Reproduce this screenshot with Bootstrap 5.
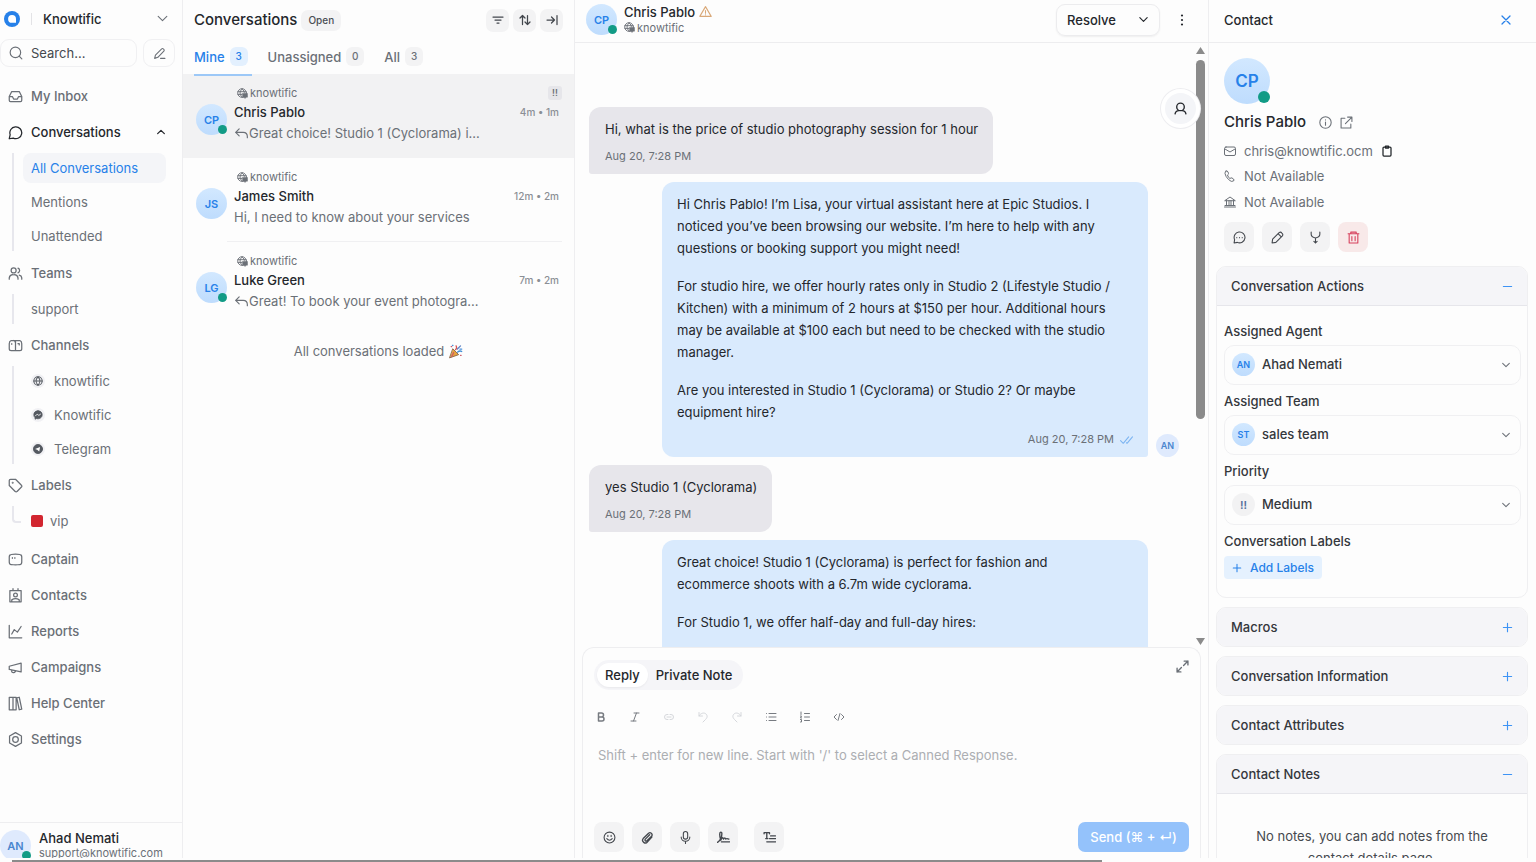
<!DOCTYPE html>
<html lang="en">
<head>
<meta charset="utf-8">
<meta name="viewport" content="width=device-width, initial-scale=1">
<title>Knowtific – Conversations</title>
<link href="https://cdn.jsdelivr.net/npm/bootstrap@5.3.0/dist/css/bootstrap.min.css" rel="stylesheet">
<style>
:root{--ink:#24272c;--mute:#6b7077;--line:#eeeef0;--soft:#f3f3f4;--blue:#2781e9}
body{font-family:Inter,"Liberation Sans",sans-serif;font-size:13px;line-height:20px;color:var(--ink);background:#fdfdfd}
svg{display:block;flex:none;fill:none;stroke:currentColor;stroke-width:2;stroke-linecap:round;stroke-linejoin:round}
svg.bold{stroke-width:2.5}
svg.heavy{stroke-width:3}
svg.solid{fill:currentColor;stroke:none}
button{font:inherit;color:inherit;border:0;background:none;padding:0}
a{color:inherit;text-decoration:none}
h1,h2,h3,p,ul{margin:0;padding:0}
h1,h3{font-size:15px;line-height:22px}
h2{font-size:13px;line-height:20px}
ul{list-style:none}
.mute{color:var(--mute)}
.blue{color:var(--blue)}
.t11{font-size:11px;line-height:18px}
.med{font-weight:500}
.tight{line-height:16px}
.min0{min-width:0;min-height:0}
/* avatars */
.face{position:relative;flex:none;display:flex;align-items:center;justify-content:center;width:31px;height:31px;border-radius:50%;background:linear-gradient(#d2e8ff,#bedcfd);color:var(--blue);font-size:11px;font-weight:600}
.face.tiny{width:23px;height:23px;font-size:9px}
.face.big{width:46px;height:46px;font-size:17px}
.face.pale{background:#dfeafd;color:#4a86cf}
.face.flag{background:#f2f2f3;color:#56709c;font-size:11px}
.face i{position:absolute;right:0;bottom:1px;width:9px;height:9px;border-radius:50%;background:#129b86}
.face.big i{width:12px;height:12px}
/* sidebar */
.side{width:183px;border-right:1px solid var(--line)}
.brand{height:37px;padding:0 13px 0 4px;gap:11px}
.brand .tick{width:1px;height:12px;background:#e3e3e6}
.finder{gap:6px;padding-top:2px}
.box{border:1px solid #f0f0f2;border-radius:9px;background:#fdfdfd}
.find{width:137px;height:28px;padding:0 8px}
.find input{border:0;background:none;outline:0;padding:0;font:inherit;color:var(--ink)}
.find input::placeholder{color:#45494e;opacity:1}
.pen{width:32px;height:28px}
.menu{padding-top:11px}
.menu .top{display:flex;align-items:center;gap:8px;height:36px;padding:0 16px 0 8px;color:#6a6f76;font-weight:500}
.menu .top.on{color:var(--ink)}
.sub{margin:3px 0 3px 12px;border-left:2px solid #e7e7ed;display:flex;flex-direction:column;gap:4px}
.sub.first{margin-bottom:4px}
.sub a{display:flex;align-items:center;gap:9px;height:30px;margin:0 16px 0 9px;padding:0 8px;border-radius:8px;color:#6b7077}
.sub a.on{background:#f4f5f8;color:var(--blue)}
.sub .disc{width:14px;height:14px;border-radius:50%;background:#f1f1f4;display:flex;align-items:center;justify-content:center;color:#555a61}
.sub.last{border-color:transparent;position:relative;margin-bottom:5px}
.sub.last::before{content:"";position:absolute;left:-2px;top:0;width:9px;height:17px;border:2px solid #e7e7ed;border-width:0 0 2px 2px;border-radius:0 0 0 4px}
.sub.last a{gap:7px}
.swatch{width:12px;height:12px;border-radius:2px;background:#d22630}
.me{border-top:1px solid var(--line);height:36px;padding-top:7px}
.me .t11{line-height:14px}
/* conversation list */
.list{width:392px;border-right:1px solid var(--line)}
.list .head{height:40px;padding:0 11px}
.chip{background:var(--soft);border-radius:7px;font-size:10px;font-weight:500;height:21px;padding:0 7px;color:#4a4e54}
.sq{width:23px;height:23px;border-radius:7px;background:var(--soft);display:flex;align-items:center;justify-content:center;color:#43474d}
.tabs{padding:7px 11px 0;height:34px;gap:20px}
.tabs button{position:relative;display:flex;gap:5px;height:27px;align-items:start;font-weight:500;color:var(--mute)}
.tabs .num{background:var(--soft);border-radius:6px;width:18px;height:19px;font-size:10px;line-height:19px;text-align:center}
.tabs .on{color:var(--blue)}
.tabs .on .num{background:#e3f0fe}
.tabs .on::after{content:"";position:absolute;left:0;right:-4px;bottom:-2px;height:2px;background:#9cc8f7;z-index:1}
.conv{height:84px;display:flex;padding-left:13px}
.conv.on{background:#f2f2f3}
.conv .face{margin-top:30px}
.conv .txt{flex:1;min-width:0;padding:10px 0 0 7px;margin-right:12px}
.conv.rule .txt{border-bottom:1px solid #f0f0f2}
.origin{display:flex;align-items:center;gap:2px;color:var(--mute)}
.conv .origin{padding-left:3px}
.when{font-size:10px;color:#8b8f95;padding-right:3px;font-weight:500}
.prio{width:14px;height:14px;border-radius:3px;background:#e6e6ea;font-size:9px;line-height:14px;text-align:center;font-weight:600}
.peek{margin-top:1px}
.done{padding-top:15px}
/* chat */
.bar{height:43px;border-bottom:1px solid #ededef;padding:0 20px 3px 11px}
.who{padding-left:7px}
.who svg.warn{color:#d9a878}
.resolve{height:32px;border:1px solid #ececee;border-radius:9px;box-shadow:0 1px 2px #0000000f;width:104px;padding:0 10px}
.feed{position:relative;padding:64px 29px 0 14px;gap:8px}
.say{border-radius:12px;padding:11px 15px 9px;line-height:22px}
.say p+p{margin-top:16px}
.say time{display:block;font-size:11px;line-height:18px;color:#6b7077;margin-top:7px}
.say.them{background:#e7e6eb;border-bottom-left-radius:3px;align-self:flex-start;padding-left:16px}
.say.us{background:#d9eafd;width:486px;border-bottom-right-radius:3px}
.say.us p{padding-right:14px}
.say.us time{display:flex;justify-content:end;align-items:center;gap:6px}
.say.us time svg{color:#7db5f2}
.rail{position:absolute;right:3px;top:4px;bottom:2px;width:9px;display:flex;flex-direction:column;color:#8b8b8b}
.rail b{flex:0 0 60%;margin-top:6px;border-radius:5px;background:#8b8b8b}
.fab{position:absolute;right:8px;top:46px;width:39px;height:39px;border-radius:50%;background:#f4f5f8;border:4px solid #fff;box-shadow:0 0 0 1px #ededf0;display:flex;align-items:center;justify-content:center}
.desk{border:1px solid var(--line);border-bottom:0;border-radius:12px 12px 0 0;margin:0 7px;height:211px;padding:12px 11px 0}
.modes{background:#f5f5f8;border-radius:15px;height:30px;padding:3px}
.modes button{height:24px;border-radius:12px;padding:0 8px;font-weight:500}
.modes .on{background:#fff;box-shadow:0 1px 2px #0000000d}
.fmt{gap:20px;height:14px;margin-top:20px;color:#777b81}
.fmt button{width:14px;height:14px;display:flex;align-items:center;justify-content:center}
.fmt .off{color:#d6d8dc}
.desk textarea{border:0;background:none;resize:none;outline:0;width:100%;height:66px;margin-top:21px;padding:0 4px;font:inherit;color:inherit}
.desk textarea::placeholder{color:#acaeb2;opacity:1}
.tools{padding-top:11px}
.tool{width:30px;height:30px;border-radius:8px;background:var(--soft);display:flex;align-items:center;justify-content:center;color:#43474d}
.tool.risk{background:#f8e9e9;color:#d6405c}
.send{height:30px;width:111px;border-radius:7px;background:#94c2fb;color:#fff;font-weight:500}
/* contact */
.info{width:328px;border-left:1px solid var(--line)}
.info .bar{padding:0 24px 3px 15px}
.person{padding:15px 15px 14px}
.person .name{margin-top:7px;height:22px;gap:8px}
.person .name h3{margin-right:5px}
.person .row1{height:28px;margin-top:4px}
.person .row2{height:22px}
.person .row3{height:30px}
.person .acts{margin-top:5px}
.fold{border:1px solid #efeff1;border-radius:10px;margin:0 8px 9px 7px;overflow:hidden;flex:none}
.fold>button{display:flex;width:100%;height:38px;align-items:center;justify-content:space-between;padding:0 14px;background:#f5f5f8;font-weight:500;color:#34373c}
.fold.open>button{height:39px;border-bottom:1px solid #e6e6eb}
.fold svg.sign{color:#3d93f5}
.fold .fields{padding:15px 6px 18px 7px}
.fold .empty{padding:31px 24px;line-height:22px;color:#45494e;text-align:center}
.pick{position:relative;margin:4px 0 6px}
.pick .face{position:absolute;left:8px;top:8px}
.pick select{appearance:none;height:40px;width:100%;border:1px solid #f0f0f2;border-radius:10px;background-color:transparent;padding:0 30px 2px 37px;font:inherit;font-weight:500;color:#34373c;outline:0}
.pick svg{position:absolute;right:10px;top:15px;pointer-events:none;color:#6b7077}
.fold label,.fold .cap{font-weight:500;color:#34373c;display:block}
.add{background:#e5f1fe;color:var(--blue);border-radius:4px;height:23px;padding:0 8px;font-size:12px;font-weight:500;gap:8px;margin-top:5px}
.hbar{height:4px;padding:2px 0 0 12px}
.hbar b{display:block;width:71.5%;height:2px;background:#8b8b8b}
</style>
</head>
<body>
<svg width="0" height="0" class="position-absolute" aria-hidden="true">
<symbol id="down" viewBox="0 0 24 24"><path d="m4 8 8 8 8-8"/></symbol>
<symbol id="globe" viewBox="0 0 24 24"><circle cx="11" cy="11" r="9.500"/><path d="M2 8h18M2 14h9M11 2c-6 6-6 12 0 18M11 2c4 3 5 6 5 9"/><path d="M12 12h11v8h-3l-2.500 3-2.500-3h-3z" fill="currentColor" stroke-width="1"/></symbol>
<symbol id="reply" viewBox="0 0 24 24"><path d="M8 5 2 11l6 6M2 11h13c4 0 7 3 7 7v2"/></symbol>
<symbol id="minus" viewBox="0 0 24 24"><path d="M3 12h18"/></symbol>
<symbol id="plus" viewBox="0 0 24 24"><path d="M3 12h18M12 3v18"/></symbol>
</svg>
<div class="d-flex flex-column vh-100 overflow-hidden">
<div class="d-flex flex-grow-1 overflow-hidden min0">

<aside class="side d-flex flex-column flex-shrink-0">
  <button class="brand d-flex align-items-center w-100">
    <svg class="solid blue" width="16" height="16" viewBox="0 0 16 16"><circle cx="8" cy="8" r="8"/><path d="M8 4a4 4 0 0 1 4 4v3.800H8A3.900 3.900 0 0 1 8 4z" fill="#fff"/></svg>
    <span class="tick"></span>
    <span class="med">Knowtific</span>
    <svg class="ms-auto mute" width="13" height="13"><use href="#down"/></svg>
  </button>
  <div class="finder d-flex">
    <label class="find box d-flex align-items-center gap-2"><svg class="mute" width="14" height="14" viewBox="0 0 24 24"><circle cx="11" cy="11" r="9"/><path d="m22 22-4.500-4.500"/></svg><input type="search" class="w-100 min0" placeholder="Search..." aria-label="Search"></label>
    <button class="pen box d-flex align-items-center justify-content-center mute" aria-label="Compose"><svg width="13" height="13" viewBox="0 0 24 24"><path d="M3 21l1.500-6L16 3.500a2 2 0 0 1 3 0l1 1a2 2 0 0 1 0 3L9 19l-6 2zM14 21h8"/></svg></button>
  </div>
  <nav class="menu flex-grow-1 overflow-hidden" aria-label="Main">
    <a class="top" href="#"><svg width="15" height="15" viewBox="0 0 24 24"><path d="M2 12h5l2 4h6l2-4h5M6 4h12l4 8v6a2 2 0 0 1-2 2H4a2 2 0 0 1-2-2v-6z"/></svg>My Inbox</a>
    <a class="top on" href="#"><svg width="15" height="15" viewBox="0 0 24 24"><path d="M3.500 15.500A9.500 9.500 0 1 1 8.500 21L2 22z"/></svg>Conversations<svg class="ms-auto heavy" width="10" height="10" viewBox="0 0 24 24"><path d="m4 16 8-8 8 8"/></svg></a>
    <ul class="sub first"><li><a class="on" href="#">All Conversations</a></li><li><a href="#">Mentions</a></li><li><a href="#">Unattended</a></li></ul>
    <a class="top" href="#"><svg width="15" height="15" viewBox="0 0 24 24"><circle cx="9" cy="7" r="4"/><path d="M2 21v-2a6 6 0 0 1 6-5h2a6 6 0 0 1 6 5v2M16 3.500a4 4 0 0 1 0 7.500M22 21v-2a5 5 0 0 0-4-4.500"/></svg>Teams</a>
    <ul class="sub"><li><a href="#">support</a></li></ul>
    <a class="top" href="#"><svg width="15" height="15" viewBox="0 0 24 24"><path d="M5 4h14q3 1 3 5v8q0 3-3 3H5q-3 0-3-3V9q0-4 3-5zM12 4v16M9 4q3 1 3 4M6 9v1M16 9h2v2M12 20H9"/></svg>Channels</a>
    <ul class="sub">
      <li><a href="#"><span class="disc"><svg class="bold" width="10" height="10" viewBox="0 0 24 24"><circle cx="12" cy="12" r="10"/><path d="M2 12h20M12 2c-6 6-6 14 0 20M12 2c6 6 6 14 0 20"/></svg></span>knowtific</a></li>
      <li><a href="#"><span class="disc"><svg width="10" height="10" viewBox="0 0 24 24"><path d="M12 2C6 2 2 6 2 11.500c0 3 1 5 3 7V22l3.500-1.500c8 2 13.500-3 13.500-9C22 6 18 2 12 2z" fill="currentColor"/><path d="m6 14 4-4 4 3 4-3" stroke="#fff"/></svg></span>Knowtific</a></li>
      <li><a href="#"><span class="disc"><svg width="10" height="10" viewBox="0 0 24 24"><circle cx="12" cy="12" r="11" fill="currentColor"/><path d="m5 12 12-5-2 11-5-4z" fill="#fff" stroke="none"/></svg></span>Telegram</a></li>
    </ul>
    <a class="top" href="#"><svg width="15" height="15" viewBox="0 0 24 24"><path d="M2 4a2 2 0 0 1 2-2h8l9.500 9.500a2 2 0 0 1 0 3l-7 7a2 2 0 0 1-3 0L2 12z"/><circle cx="7.500" cy="7.500" r=".6"/></svg>Labels</a>
    <ul class="sub last"><li><a href="#"><span class="swatch"></span>vip</a></li></ul>
    <a class="top" href="#"><svg width="15" height="15" viewBox="0 0 24 24"><path d="M5 4q7-1 14 0 3 0 3 4v8q0 4-3 4-7 1-14 0-3 0-3-4V8q0-4 3-4zM7 9v1M11 9v1"/></svg>Captain</a>
    <a class="top" href="#"><svg width="15" height="15" viewBox="0 0 24 24"><path d="M3 4h18v18H3zM8 1v3M16 1v3M6 22v-3q6-4 12 0v3"/><circle cx="12" cy="11" r="3"/></svg>Contacts</a>
    <a class="top" href="#"><svg width="15" height="15" viewBox="0 0 24 24"><path d="M2 2v20h20M6 16l4-7 5 4 6-9"/></svg>Reports</a>
    <a class="top" href="#"><svg width="15" height="15" viewBox="0 0 24 24"><path d="M2 10 21 5v14L2 15zM6 16v3q3 3 6-1"/></svg>Campaigns</a>
    <a class="top" href="#"><svg width="15" height="15" viewBox="0 0 24 24"><path d="M2 2h6v20H2zM8 2h5v20H8zM14 3l4-1 4 19-4 1z"/></svg>Help Center</a>
    <a class="top" href="#"><svg width="15" height="15" viewBox="0 0 24 24"><path d="m12 1 9.500 5.500v11L12 23l-9.500-5.500v-11z"/><circle cx="12" cy="12" r="4.500"/></svg>Settings</a>
  </nav>
  <div class="me d-flex gap-2">
    <span class="face pale">AN<i></i></span>
    <div><div class="med tight">Ahad Nemati</div><div class="t11 mute">support@knowtific.com</div></div>
  </div>
</aside>

<section class="list d-flex flex-column flex-shrink-0">
  <div class="head d-flex align-items-center">
    <h1 class="med">Conversations</h1>
    <button class="chip ms-1">Open</button>
    <div class="d-flex gap-1 ms-auto">
      <button class="sq" aria-label="Filter"><svg class="bold" width="12" height="12" viewBox="0 0 24 24"><path d="M2 6h20M6 12h12M10 18h4"/></svg></button>
      <button class="sq" aria-label="Sort"><svg class="bold" width="12" height="12" viewBox="0 0 24 24"><path d="M7 21V3M2 8l5-5 5 5M17 3v18M12 16l5 5 5-5"/></svg></button>
      <button class="sq" aria-label="Collapse"><svg class="bold" width="12" height="12" viewBox="0 0 24 24"><path d="M2 12h15M11 6l6 6-6 6M22 3v18"/></svg></button>
    </div>
  </div>
  <div class="tabs d-flex align-items-start">
    <button class="on">Mine <span class="num">3</span></button>
    <button>Unassigned <span class="num">0</span></button>
    <button>All <span class="num">3</span></button>
  </div>
  <a href="#" class="conv on"><span class="face">CP<i></i></span>
    <div class="txt">
      <div class="origin t11"><svg width="11" height="11"><use href="#globe"/></svg>knowtific<span class="prio ms-auto">!!</span></div>
      <div class="d-flex justify-content-between"><span class="med">Chris Pablo</span><span class="when">4m • 1m</span></div>
      <div class="peek d-flex align-items-center mute"><svg width="15" height="14"><use href="#reply"/></svg>Great choice! Studio 1 (Cyclorama) i...</div>
    </div></a>
  <a href="#" class="conv rule"><span class="face">JS</span>
    <div class="txt">
      <div class="origin t11"><svg width="11" height="11"><use href="#globe"/></svg>knowtific</div>
      <div class="d-flex justify-content-between"><span class="med">James Smith</span><span class="when">12m • 2m</span></div>
      <div class="peek mute">Hi, I need to know about your services</div>
    </div></a>
  <a href="#" class="conv"><span class="face">LG<i></i></span>
    <div class="txt">
      <div class="origin t11"><svg width="11" height="11"><use href="#globe"/></svg>knowtific</div>
      <div class="d-flex justify-content-between"><span class="med">Luke Green</span><span class="when">7m • 2m</span></div>
      <div class="peek d-flex align-items-center mute"><svg width="15" height="14"><use href="#reply"/></svg>Great! To book your event photogra...</div>
    </div></a>
  <p class="done d-flex justify-content-center align-items-center gap-1 mute">All conversations loaded
    <svg width="15" height="15" viewBox="0 0 24 24"><path d="M8 8l9 9L3 22z" fill="#e8a33d" stroke="#8a6a4a" stroke-width="1.500"/><path d="M12 9q3-2 1-6" stroke="#d9534f"/><path d="M15 13q4-3 7-1" stroke="#3f8fd6"/><path d="M15 8l5-5" stroke="#5a7fc4"/><path d="M5 4h1M20 18h1M9 14l-3 6" stroke="#c95b6b"/><path d="M19 8h3M7 2h1" stroke="#4a90d9"/></svg></p>
</section>

<main class="flex-grow-1 d-flex flex-column min0">
  <header class="bar d-flex align-items-center flex-shrink-0">
    <span class="face">CP<i></i></span>
    <div class="who"><div class="d-flex align-items-center gap-1 med tight">Chris Pablo<svg class="warn" width="13" height="13" viewBox="0 0 24 24"><path d="M12 3 1.500 21h21zM12 10v5M12 18v.200"/></svg></div>
    <div class="origin t11 tight"><svg width="11" height="11"><use href="#globe"/></svg>knowtific</div></div>
    <button class="resolve ms-auto d-flex align-items-center justify-content-between med">Resolve<svg class="bold" width="11" height="11"><use href="#down"/></svg></button>
    <button aria-label="More" class="ms-3"><svg class="solid" width="12" height="12" viewBox="0 0 24 24"><circle cx="12" cy="3" r="2.200"/><circle cx="12" cy="12" r="2.200"/><circle cx="12" cy="21" r="2.200"/></svg></button>
  </header>
  <div class="feed flex-grow-1 d-flex flex-column overflow-hidden min0">
    <div class="say them"><p>Hi, what is the price of studio photography session for 1 hour</p><time>Aug 20, 7:28 PM</time></div>
    <div class="d-flex justify-content-end align-items-end gap-2">
      <div class="say us">
        <p>Hi Chris Pablo! I’m Lisa, your virtual assistant here at Epic Studios. I noticed you’ve been browsing our website. I’m here to help with any questions or booking support you might need!</p>
        <p>For studio hire, we offer hourly rates only in Studio 2 (Lifestyle Studio / Kitchen) with a minimum of 2 hours at $150 per hour. Additional hours may be available at $100 each but need to be checked with the studio manager.</p>
        <p>Are you interested in Studio 1 (Cyclorama) or Studio 2? Or maybe equipment hire?</p>
        <time>Aug 20, 7:28 PM<svg width="13" height="13" viewBox="0 0 24 24"><path d="m1 14 5 5L16 7M12 18l1 1L23 7"/></svg></time>
      </div>
      <span class="face tiny pale">AN</span>
    </div>
    <div class="say them"><p>yes Studio 1 (Cyclorama)</p><time>Aug 20, 7:28 PM</time></div>
    <div class="d-flex justify-content-end flex-grow-1 gap-2">
      <div class="say us rounded-bottom-0">
        <p>Great choice! Studio 1 (Cyclorama) is perfect for fashion and ecommerce shoots with a 6.7m wide cyclorama.</p>
        <p>For Studio 1, we offer half-day and full-day hires:</p>
      </div>
      <span class="face tiny invisible"></span>
    </div>
    <div class="rail" aria-hidden="true"><svg class="solid" width="9" height="7" viewBox="0 0 9 7"><path d="M4.500 0 9 7H0z"/></svg><b></b><svg class="solid mt-auto" width="9" height="7" viewBox="0 0 9 7"><path d="M4.500 7 9 0H0z"/></svg></div>
    <button class="fab" aria-label="Contact panel"><svg class="bold" width="13" height="13" viewBox="0 0 24 24"><circle cx="12" cy="9" r="7"/><path d="M2 22q1-6 7-6M22 22q-1-6-7-6"/></svg></button>
  </div>
  <div class="desk flex-shrink-0 d-flex flex-column">
    <div class="d-flex justify-content-between align-items-start">
      <div class="modes d-flex"><button class="on">Reply</button><button>Private Note</button></div>
      <button aria-label="Expand"><svg class="mute bold" width="13" height="13" viewBox="0 0 24 24"><path d="M15 2h7v7M22 2l-8 8M9 22H2v-7M2 22l8-8"/></svg></button>
    </div>
    <div class="fmt d-flex">
      <button aria-label="Bold"><svg class="heavy" width="12" height="12" viewBox="0 0 24 24"><path d="M7 4h6a4 4 0 0 1 0 8H7zM7 12h7a4 4 0 0 1 0 8H7z"/></svg></button>
      <button aria-label="Italic"><svg width="12" height="12" viewBox="0 0 24 24"><path d="M10 4h10M4 20h10M15 4 9 20"/></svg></button>
      <button class="off" aria-label="Link"><svg width="12" height="12" viewBox="0 0 24 24"><path d="M10 7H8a5 5 0 0 0 0 10h2M14 7h2a5 5 0 0 1 0 10h-2M8 12h8"/></svg></button>
      <button class="off" aria-label="Undo"><svg width="12" height="12" viewBox="0 0 24 24"><path d="M4 3v7h7M4 10c4-7 11-7 14-4 4 4 2 8-1 11l-5 5"/></svg></button>
      <button class="off" aria-label="Redo"><svg width="12" height="12" viewBox="0 0 24 24"><path d="M20 3v7h-7M20 10c-4-7-11-7-14-4-4 4-2 8 1 11l5 5"/></svg></button>
      <button aria-label="Bullet list"><svg width="12" height="12" viewBox="0 0 24 24"><path d="M8 5h14M8 12h14M8 19h14M3 5v.100M3 12v.100M3 19v.100"/></svg></button>
      <button aria-label="Numbered list"><svg width="12" height="12" viewBox="0 0 24 24"><path d="M11 5h10M11 12h10M11 19h10M4 2v5M3 10h2l-2 4h2M3 17h2v5H3"/></svg></button>
      <button aria-label="Code"><svg width="12" height="12" viewBox="0 0 24 24"><path d="m7 7-5 5 5 5M17 7l5 5-5 5M14 5l-4 14"/></svg></button>
    </div>
    <textarea aria-label="Reply" placeholder="Shift + enter for new line. Start with '/' to select a Canned Response."></textarea>
    <div class="tools d-flex gap-2">
      <button class="tool" aria-label="Emoji"><svg width="13" height="13" viewBox="0 0 24 24"><circle cx="12" cy="12" r="10"/><path d="M7 14q5 6 10 0M9 8v2M15 8v2"/></svg></button>
      <button class="tool" aria-label="Attach"><svg class="bold" width="13" height="13" viewBox="0 0 24 24"><path d="m20 11-8 9a5 5 0 0 1-8-6L14 4a4 4 0 0 1 6 5l-9 9a2 2 0 0 1-3-3l8-8"/></svg></button>
      <button class="tool" aria-label="Record"><svg width="13" height="13" viewBox="0 0 24 24"><rect x="8" y="1" width="8" height="14" rx="4"/><path d="M4 11a8 8 0 0 0 16 0M12 19v4"/></svg></button>
      <button class="tool" aria-label="Signature"><svg class="bold" width="13" height="13" viewBox="0 0 24 24"><path d="M1 21c6-4 8-11 8-16 0-4-4-4-4 1 0 5 1 8 2 11 2-5 4-6 5-2 2-3 3-3 4 0 2-2 3-1 6 0M8 20h15"/></svg></button>
      <button class="tool ms-2" aria-label="Template"><svg class="bold" width="13" height="13" viewBox="0 0 24 24"><path d="M2 3h10M2 3v2M12 3v2M7 3v11M5 14h4M14 9h9M12 14h11M7 20h16"/></svg></button>
      <button class="send ms-auto">Send (⌘ + ↵)</button>
    </div>
  </div>
</main>

<aside class="info d-flex flex-column flex-shrink-0">
  <div class="bar d-flex align-items-center justify-content-between flex-shrink-0"><h2 class="med">Contact</h2>
    <button class="blue" aria-label="Close"><svg class="bold" width="12" height="12" viewBox="0 0 24 24"><path d="m4 4 16 16M20 4 4 20"/></svg></button></div>
  <div class="person">
    <span class="face big">CP<i></i></span>
    <div class="name d-flex align-items-center"><h3 class="med">Chris Pablo</h3>
      <svg class="mute" width="13" height="13" viewBox="0 0 24 24"><circle cx="12" cy="12" r="10.500"/><path d="M12 11v6M12 7v.200"/></svg>
      <svg class="mute" width="13" height="13" viewBox="0 0 24 24"><path d="M9 4H2v18h18v-7M14 2h8v8M22 2 10 14"/></svg></div>
    <div class="row1 d-flex align-items-center gap-2 mute"><svg width="12" height="12" viewBox="0 0 24 24"><rect x="1" y="4" width="22" height="17" rx="3"/><path d="m2 8 10 6 10-6"/></svg><a href="#">chris@knowtific.ocm</a><button aria-label="Copy" class="text-dark"><svg class="bold" width="12" height="12" viewBox="0 0 24 24"><rect x="4" y="4" width="16" height="18" rx="2"/><path d="M9 2h6v4H9z"/></svg></button></div>
    <div class="row2 d-flex align-items-center gap-2 mute"><svg width="12" height="12" viewBox="0 0 24 24"><path d="M4 2q3-1 4 2l1 3q0 2-2 3 1 5 5 7 2-2 4-1l3 2q2 2 0 4-4 3-10-3T2 7q0-4 2-5z"/></svg>Not Available</div>
    <div class="row3 d-flex align-items-center gap-2 mute"><svg width="12" height="12" viewBox="0 0 24 24"><path d="M2 9 12 2l10 7zM5 9v10M10 9v10M14 9v10M19 9v10M2 19h20M1 22h22"/></svg>Not Available</div>
    <div class="acts d-flex gap-2">
      <button class="tool" aria-label="New message"><svg width="13" height="13" viewBox="0 0 24 24"><path d="M3 16A10 10 0 1 1 8 21l-6 1zM7 12v.300M12 12v.300M17 12v.300"/></svg></button>
      <button class="tool" aria-label="Edit"><svg width="13" height="13" viewBox="0 0 24 24"><path d="m2 22 1-7L15 3q3-2 5 1 3 2 1 5L9 21zM13 5l6 6"/></svg></button>
      <button class="tool" aria-label="Merge"><svg width="13" height="13" viewBox="0 0 24 24"><path d="M4 2v4q0 5 8 7 8-2 8-7V2M12 13v9M9 19l3 3 3-3"/></svg></button>
      <button class="tool risk" aria-label="Delete"><svg width="13" height="13" viewBox="0 0 24 24"><path d="M2 5h20M7 5V2h10v3M4 5v17h16V5M9 10v8M15 10v8"/></svg></button>
    </div>
  </div>
  <div class="fold open"><button aria-expanded="true">Conversation Actions<svg class="sign bold" width="11" height="11"><use href="#minus"/></svg></button>
    <div class="fields">
      <label for="agent">Assigned Agent</label>
      <div class="pick"><span class="face tiny">AN</span><select id="agent"><option>Ahad Nemati</option></select><svg class="bold" width="10" height="10"><use href="#down"/></svg></div>
      <label for="team">Assigned Team</label>
      <div class="pick"><span class="face tiny">ST</span><select id="team"><option>sales team</option></select><svg class="bold" width="10" height="10"><use href="#down"/></svg></div>
      <label for="level">Priority</label>
      <div class="pick"><span class="face tiny flag">!!</span><select id="level"><option>Medium</option></select><svg class="bold" width="10" height="10"><use href="#down"/></svg></div>
      <div class="cap">Conversation Labels</div>
      <button class="add d-flex align-items-center"><svg class="bold" width="10" height="10"><use href="#plus"/></svg>Add Labels</button>
    </div></div>
  <div class="fold"><button>Macros<svg class="sign bold" width="11" height="11"><use href="#plus"/></svg></button></div>
  <div class="fold"><button>Conversation Information<svg class="sign bold" width="11" height="11"><use href="#plus"/></svg></button></div>
  <div class="fold"><button>Contact Attributes<svg class="sign bold" width="11" height="11"><use href="#plus"/></svg></button></div>
  <div class="fold open"><button aria-expanded="true">Contact Notes<svg class="sign bold" width="11" height="11"><use href="#minus"/></svg></button>
    <p class="empty">No notes, you can add notes from the contact details page.</p></div>
</aside>
</div>
<div class="hbar" aria-hidden="true"><b></b></div>
</div>
<script src="https://cdn.jsdelivr.net/npm/bootstrap@5.3.0/dist/js/bootstrap.bundle.min.js"></script>
</body>
</html>
